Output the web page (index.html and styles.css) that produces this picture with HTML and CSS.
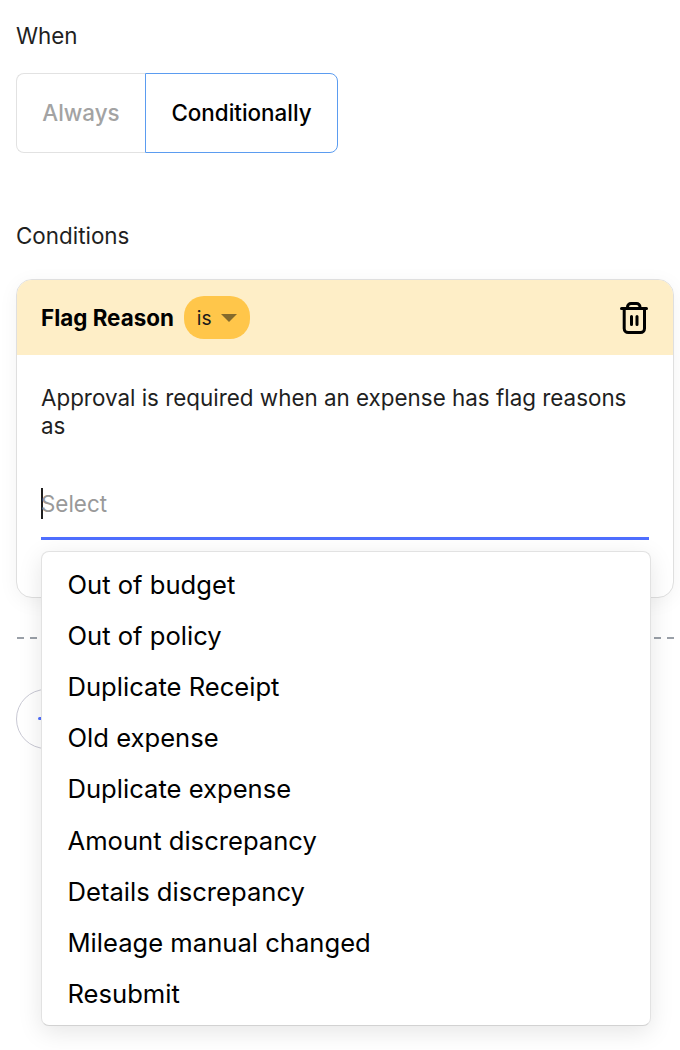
FILE: index.html
```html
<!DOCTYPE html>
<html lang="en">
<head>
<meta charset="utf-8">
<title>Conditions</title>
<link rel="stylesheet" href="styles.css">
</head>
<body>
<main class="page">
  <div class="label when-label">When</div>
  <div class="toggle">
    <button class="toggle-btn off">Always</button>
    <button class="toggle-btn on">Conditionally</button>
  </div>
  <div class="label cond-label">Conditions</div>
  <section class="card">
    <header class="card-head">
      <div class="head-left">
        <span class="head-title">Flag Reason</span>
        <span class="pill">is<span class="caret"></span></span>
      </div>
      <svg class="trash" width="30" height="32" viewBox="0 0 30 32" fill="none" stroke="#000" stroke-width="3" stroke-linecap="round" stroke-linejoin="round" aria-hidden="true">
        <path d="M2.500 6.500h25"/>
        <path d="M8.500 6V5A3.500 3.500 0 0 1 12 1.500h5.500A3.500 3.500 0 0 1 21 5v1"/>
        <path d="M5.200 7v19.500a4 4 0 0 0 4 4h12.300a4 4 0 0 0 4-4V7"/>
        <path d="M12.500 14.500v8M18 14.500v8"/>
      </svg>
    </header>
    <div class="card-body">
      <p class="desc">Approval is required when an expense has flag reasons as</p>
      <div class="select">
        <div class="select-input"><span class="cursor"></span><span class="placeholder">Select</span></div>
        <ul class="menu">
          <li>Out of budget</li>
          <li>Out of policy</li>
          <li>Duplicate Receipt</li>
          <li>Old expense</li>
          <li>Duplicate expense</li>
          <li>Amount discrepancy</li>
          <li>Details discrepancy</li>
          <li>Mileage manual changed</li>
          <li>Resubmit</li>
        </ul>
      </div>
    </div>
  </section>
  <div class="divider"></div>
  <button class="add" aria-label="Add"><span class="add-bar"></span></button>
</main>
</body>
</html>
```
FILE: styles.css
```css
* { box-sizing: border-box; }
html, body { margin: 0; padding: 0; background: #fff; }
body { font-family: Inter, "Liberation Sans", sans-serif; color: #1f1f1f; }
.page { padding: 0 6px 0 16px; height: 1050px; overflow: hidden; }
.label { font-size: 22.4px; line-height: 28px; }
.when-label { padding-top: 22px; }
.toggle { display: inline-flex; height: 80px; margin-top: 23px; vertical-align: top; }
.toggle-btn { font: 500 22.4px/1 Inter, sans-serif; background: #fff; height: 80px; padding: 0; }
.toggle-btn.off { width: 129px; color: #a3a3a3; border: 1px solid #e2e2e2; border-right: 0; border-radius: 8px 0 0 8px; }
.toggle-btn.on { width: 193px; color: #000; border: 1px solid #5b9cf0; border-radius: 0 8px 8px 0; }
.cond-label { margin-top: 69px; }
.card { margin-top: 29px; border: 1px solid #dfdfdf; border-radius: 16px; background: #fff; height: 319px; box-shadow: 0 4px 20px rgba(0,0,0,.05); }
.card-head { height: 75px; background: #feeec7; border-radius: 15px 15px 0 0; display: flex; align-items: center; justify-content: space-between; padding: 0 24px; }
.head-left { display: flex; align-items: center; gap: 10px; }
.head-title { font-size: 22.4px; font-weight: 700; color: #000; }
.pill { display: inline-flex; align-items: center; gap: 9.500px; height: 43px; width: 66px; padding: 0 0 0 13px; background: #ffc64a; border-radius: 20px; font-size: 19.2px; color: #1a1a1a; }
.caret { width: 0; height: 0; border-left: 8px solid transparent; border-right: 8px solid transparent; border-top: 8px solid #846a2c; }
.trash { display: block; }
.card-body { padding: 29px 24px 0; }
.desc { margin: 0; font-size: 22.4px; line-height: 28px; color: #1f1f1f; }
.select { position: relative; margin-top: 37px; }
.select-input { height: 63px; padding-bottom: 8px; border-bottom: 3px solid #4f6fff; display: flex; align-items: center; }
.cursor { width: 2px; height: 31px; background: #1f1f1f; margin-right: -2px; }
.placeholder { font-size: 22.4px; color: #999; }
.menu { position: absolute; top: 74px; left: 0; width: 610px; height: 475px; margin: 0; padding: 6.600px 0 0; list-style: none; background: #fff; border: 1px solid #e2e2e2; border-bottom-color: #d2d2d2; border-radius: 8px; box-shadow: 0 6px 24px rgba(0,0,0,.1); z-index: 2; }
.menu li { height: 51.2px; line-height: 51.2px; padding-left: 25.500px; font-size: 25.600px; color: #000; }
.divider { margin-top: 39px; height: 2px; background: repeating-linear-gradient(90deg, #9aa0a8 0 7px, transparent 7px 13px) 1px 0; }
.add { display: block; margin-top: 50px; width: 60px; height: 60px; padding: 0; border: 1px solid #c9c9d4; border-radius: 50%; background: #fff; position: relative; }
.add-bar { position: absolute; left: 21px; top: 27px; width: 16px; height: 3px; border-radius: 2px; background: #4f6fff; }
```
